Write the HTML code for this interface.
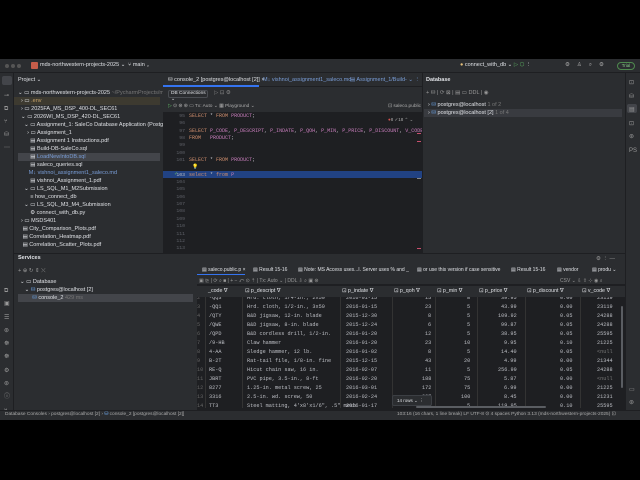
<!DOCTYPE html>
<html><head><meta charset="utf-8"><style>
*{margin:0;padding:0;box-sizing:border-box}
body{width:640px;height:480px;background:#000;position:relative;overflow:hidden;font-family:"Liberation Sans",sans-serif;font-size:5.5px;color:#bcbec4}
.a{position:absolute}
.m{font-family:"Liberation Mono",monospace}
.row{position:absolute;left:0;width:428px;height:9px;line-height:9px;white-space:nowrap}
.row span{position:absolute}
.kw{color:#cf8e6d}.id{color:#c77dbb}
</style></head><body>
<div class="a" style="left:0;top:59px;width:640px;height:361px;background:#2b2d30"></div>
<div class="a" style="left:0;top:59px;width:640px;height:14px;background:#2b2d30;border-bottom:1px solid #1e1f22"></div>
<div class="a" style="left:5px;top:64px;width:4px;height:4px;border-radius:50%;background:#555"></div>
<div class="a" style="left:11px;top:64px;width:4px;height:4px;border-radius:50%;background:#555"></div>
<div class="a" style="left:17px;top:64px;width:4px;height:4px;border-radius:50%;background:#555"></div>
<div class="a" style="left:31px;top:62px;width:7px;height:7px;border-radius:1px;background:#c65d4a"></div>
<div class="a" style="left:40px;top:62px;color:#dfe1e5">mds-northwestern-projects-2025 ⌄</div>
<div class="a" style="left:128px;top:62px;color:#dfe1e5">⑂ main ⌄</div>
<div class="a" style="left:460px;top:62px;color:#dfe1e5"><span style="color:#e5c07b">●</span> connect_with_db ⌄ <span style="color:#5fb865">▷ ⬡</span> ⋮</div>
<div class="a" style="left:565px;top:62px;color:#aaa;letter-spacing:7px">⚙♙⌕⚙</div>
<div class="a" style="left:617px;top:62px;width:18px;height:8px;border:1px solid #4e8a4e;border-radius:4px;color:#8c8;font-size:4.5px;text-align:center;line-height:6px">Trial</div>
<div class="a" style="left:0;top:73px;width:14px;height:337px;background:#2b2d30;border-right:1px solid #1e1f22"></div>
<div class="a" style="left:2px;top:76px;width:10px;height:9px;background:#43454a;border-radius:2px"></div>
<div class="a" style="left:4px;top:90px;color:#999;line-height:13px;font-size:6px">⊸<br>⧉<br>⑂<br>⛁<br>⋯</div>
<div class="a" style="left:4px;top:285px;color:#999;line-height:13.3px;font-size:6px">⧉<br>▣<br>☰<br>⊛<br>☸<br>☸<br>⚙<br>⊛<br>ⓘ<br>⑂</div>
<div class="a" style="left:18px;top:77px;color:#dfe1e5">Project ⌄</div>
<div class="a" style="left:14px;top:97px;width:146px;height:8px;background:#3d3a30"></div>
<div class="a" style="left:18px;top:153px;width:142px;height:8px;background:#43454a"></div>
<div class="a" style="line-height:8px;color:#dfe1e5;white-space:pre;left:18px;top:89px">⌄ ▭ mds-northwestern-projects-2025 <span style="color:#777">~/PycharmProjects/mds-n</span>
  › ▭ <span style="color:#c9a46a">.env</span>
  › ▭ 2025FA_MS_DSP_400-DL_SEC61
  ⌄ ▭ 2026WI_MS_DSP_420-DL_SEC61
    ⌄ ▭ Assignment_1: SaleCo Database Application (Postgres)
      › ▭ Assignment_1
        ▤ Assignment 1 Instructions.pdf
        ▤ Build-DB-SaleCo.sql
        ▤ <span style="color:#7a9ed8">LoadNewIntoDB.sql</span>
        ▤ saleco_queries.sql
       <span style="color:#7a9ed8">M↓ vishnoi_assignment1_saleco.md</span>
        ▤ vishnoi_Assignment_1.pdf
    ⌄ ▭ LS_SQL_M1_M2Submission
        ≡ how_connect_db
    ⌄ ▭ LS_SQL_M3_M4_Submission
        ⚙ connect_with_db.py
  › ▭ MSDS401
   ▤ City_Comparison_Plots.pdf
   ▤ Correlation_Heatmap.pdf
   ▤ Correlation_Scatter_Plots.pdf</div>
<div class="a" style="left:163px;top:73px;width:259px;height:180px;background:#1e1f22;border-left:1px solid #1e1f22"></div>
<div class="a" style="left:163px;top:73px;width:259px;height:14px;background:#2b2d30;border-bottom:1px solid #1e1f22"></div>
<div class="a" style="left:163px;top:85px;width:96px;height:2px;background:#3574f0"></div>
<div class="a" style="left:168px;top:77px;color:#dfe1e5;white-space:nowrap">⛁ console_2 [postgres@localhost [2]] ×</div>
<div class="a" style="left:263px;top:77px;color:#7a9ed8;white-space:nowrap">M↓ vishnoi_assignment1_saleco.md</div>
<div class="a" style="left:350px;top:77px;color:#7a9ed8;white-space:nowrap">▤ Assignment_1/Build-  ⌄ ⋮</div>
<div class="a" style="left:163px;top:87px;width:259px;height:26px;background:#2b2d30;border-bottom:1px solid #1e1f22"></div>
<div class="a" style="left:168px;top:90px;width:40px;height:8px;border:1px solid #4a4d52;border-radius:2px;color:#dfe1e5;font-size:4.8px;padding-left:2px;line-height:6px">DB Connections ⌄</div>
<div class="a" style="left:214px;top:90px;color:#888">▷  ⊡  ⚙</div>
<div class="a" style="left:388px;top:104px;color:#aaa;font-size:4.8px">⊡ saleco.public ⌄</div>
<div class="a" style="left:168px;top:104px;color:#aaa;font-size:4.8px;white-space:nowrap"><span style="color:#5fb865">▷</span> ⊙ ⊛ ⊛  ▭  Tx: Auto ⌄  ▦  Playground ⌄</div>
<div class="a" style="left:388px;top:117px;color:#aaa;font-size:4.5px"><span style="color:#d9534f">●</span>8 ✓18 ⌃ ⌄</div>
<div class="a" style="left:163px;top:171px;width:259px;height:7px;background:#214283"></div>
<div class="a m" style="left:163px;top:113px;width:22px;text-align:right;color:#5e6068;font-size:4.8px;line-height:7.35px;white-space:pre">95
96
97
98
99
100
101

<span style="color:#bcbec4">103</span>
104
105
106
107
108
109
110
111
112
113</div>
<div class="a" style="left:174px;top:171px;color:#5fb865;font-size:5px">✓</div>
<div class="a m" style="left:189px;top:113px;font-size:5px;line-height:7.35px;white-space:pre;color:#bcbec4"><span class="kw">SELECT</span> * <span class="kw">FROM</span> <span class="id">PRODUCT</span>;

<span class="kw">SELECT</span> <span class="id">P_CODE</span>, <span class="id">P_DESCRIPT</span>, <span class="id">P_INDATE</span>, <span class="id">P_QOH</span>, <span class="id">P_MIN</span>, <span class="id">P_PRICE</span>, <span class="id">P_DISCOUNT</span>, <span class="id">V_CODE</span>
<span class="kw">FROM</span>   <span class="id">PRODUCT</span>;


<span class="kw">SELECT</span> * <span class="kw">FROM</span> <span class="id">PRODUCT</span>;
 <span style="color:#e5c07b">💡</span>
<span class="kw">select</span> * <span class="kw">from</span> <span class="id">P</span></div>
<div class="a" style="left:417px;top:133px;width:4px;height:1px;background:#c94f6d"></div>
<div class="a" style="left:417px;top:141px;width:4px;height:1px;background:#c94f6d"></div>
<div class="a" style="left:417px;top:178px;width:4px;height:1px;background:#888"></div>
<div class="a" style="left:417px;top:248px;width:4px;height:1px;background:#c94f6d"></div>
<div class="a" style="left:422px;top:73px;width:203px;height:180px;background:#2b2d30;border-left:1px solid #1e1f22"></div>
<div class="a" style="left:426px;top:77px;color:#dfe1e5;font-weight:bold">Database</div>
<div class="a" style="left:426px;top:90px;color:#999;white-space:nowrap">+ ⛁ | ⟳ ⊠ | ▤ ▭ DDL | ◉</div>
<div class="a" style="left:424px;top:109px;width:198px;height:8px;background:#393b40"></div>
<div class="a" style="left:428px;top:101px;line-height:8px;color:#dfe1e5;white-space:pre">› <span style="color:#6aa0e0">⛁</span> postgres@localhost <span style="color:#777">1 of 2</span>
› <span style="color:#6aa0e0">⛁</span> postgres@localhost [2] <span style="color:#777">1 of 4</span></div>
<div class="a" style="left:625px;top:73px;width:15px;height:337px;background:#2b2d30;border-left:1px solid #1e1f22"></div>
<div class="a" style="left:627px;top:104px;width:10px;height:9px;background:#43454a;border-radius:2px"></div>
<div class="a" style="left:629px;top:77px;color:#999;line-height:13.5px;font-size:6px">⊡<br>⛁<br>▤<br>⊡<br>⊛<br>PS</div>
<div class="a" style="left:629px;top:384px;color:#999;line-height:13px;font-size:6px">▭<br>⊛</div>
<div class="a" style="left:14px;top:253px;width:611px;height:157px;background:#2b2d30;border-top:1px solid #1e1f22"></div>
<div class="a" style="left:18px;top:255px;color:#dfe1e5;font-weight:bold">Services</div>
<div class="a" style="left:18px;top:268px;color:#999">+ ⊕ ↻  ⇕ ⤬</div>
<div class="a" style="left:18px;top:294px;width:175px;height:8px;background:#43454a"></div>
<div class="a" style="left:20px;top:278px;line-height:8px;color:#dfe1e5;white-space:pre">⌄ ▭ Database
   ⌄ <span style="color:#6aa0e0">⛁</span> postgres@localhost [2]
        <span style="color:#6aa0e0">⛁</span> console_2 <span style="color:#777">429 ms</span></div>
<div class="a" style="left:596px;top:256px;color:#999">⚙ ⋮ —</div>
<div class="a" style="left:197px;top:263px;width:428px;height:147px;background:#1e1f22"></div>
<div class="a" style="left:197px;top:263px;width:428px;height:22px;background:#2b2d30;border-bottom:1px solid #1e1f22"></div>
<div class="a" style="left:197px;top:274px;width:48px;height:1px;background:#3574f0"></div>
<div class="a" style="left:202px;top:267px;color:#dfe1e5;white-space:nowrap;font-size:5px">▤ saleco.public.p ×</div>
<div class="a" style="left:253px;top:267px;color:#dfe1e5;white-space:nowrap;font-size:5px">▤ Result 15-16</div>
<div class="a" style="left:298px;top:267px;color:#dfe1e5;white-space:nowrap;font-size:5px">▤ Note: MS Access uses...I. Server uses % and _</div>
<div class="a" style="left:417px;top:267px;color:#dfe1e5;white-space:nowrap;font-size:5px">▤ or use this version if case sensitive</div>
<div class="a" style="left:511px;top:267px;color:#dfe1e5;white-space:nowrap;font-size:5px">▤ Result 15-16</div>
<div class="a" style="left:557px;top:267px;color:#dfe1e5;white-space:nowrap;font-size:5px">▤ vendor</div>
<div class="a" style="left:592px;top:267px;color:#dfe1e5;white-space:nowrap;font-size:5px">▤ produ  ⌄</div>
<div class="a" style="left:199px;top:278px;color:#999;white-space:nowrap;font-size:5px">▣ ⊵ | ⟳ ⌕ ■ | + − ⤺ ⊙ ⇡ | Tx: Auto ⌄ | DDL ⇩ ⌕ ▣ ⊛</div>
<div class="a" style="left:560px;top:278px;color:#999;white-space:nowrap;font-size:5px">CSV ⌄ ⇩ ⇧ ⊹ ◉ ⌕</div>
<div class="a" style="left:197px;top:286px;width:428px;height:11px;background:#2b2d30"></div>
<div class="a" style="left:197px;top:286px;width:428px;height:11px;color:#dfe1e5;font-size:5.3px;line-height:11px;white-space:nowrap">
<span class="a" style="left:11px">_code ∇</span><span class="a" style="left:48px">⊡ p_descript ∇</span><span class="a" style="left:145px">⊡ p_indate ∇</span><span class="a" style="left:197px">⊡ p_qoh ∇</span><span class="a" style="left:240px">⊡ p_min ∇</span><span class="a" style="left:282px">⊡ p_price ∇</span><span class="a" style="left:330px">⊡ p_discount ∇</span><span class="a" style="left:385px">⊡ v_code ∇</span></div>
<div class="a m" style="left:197px;top:297px;width:424px;height:111px;overflow:hidden;font-size:5.2px;color:#bcbec4">
<div class="a" style="left:8px;top:0;width:1px;height:114px;background:#333"></div>
<div class="a" style="left:45px;top:0;width:1px;height:114px;background:#333"></div>
<div class="a" style="left:143px;top:0;width:1px;height:114px;background:#333"></div>
<div class="a" style="left:195px;top:0;width:1px;height:114px;background:#333"></div>
<div class="a" style="left:238px;top:0;width:1px;height:114px;background:#333"></div>
<div class="a" style="left:280px;top:0;width:1px;height:114px;background:#333"></div>
<div class="a" style="left:328px;top:0;width:1px;height:114px;background:#333"></div>
<div class="a" style="left:383px;top:0;width:1px;height:114px;background:#333"></div>
<div class="row" style="top:-3px"><span style="left:0;color:#666">2</span><span style="left:12px">-QQ3</span><span style="left:50px">Hrd. cloth, 1/4-in., 2x50</span><span style="left:149px">2016-01-15</span><span style="left:228px">15</span><span style="left:270px">8</span><span style="left:304px">39.95</span><span style="left:363px">0.00</span><span style="left:400px">23119</span></div>
<div class="row" style="top:6px"><span style="left:0;color:#666">3</span><span style="left:12px">-QQ1</span><span style="left:50px">Hrd. cloth, 1/2-in., 3x50</span><span style="left:149px">2016-01-15</span><span style="left:228px">23</span><span style="left:270px">5</span><span style="left:304px">43.99</span><span style="left:363px">0.00</span><span style="left:400px">23119</span></div>
<div class="row" style="top:15px"><span style="left:0;color:#666">4</span><span style="left:12px">/QTY</span><span style="left:50px">B&amp;D jigsaw, 12-in. blade</span><span style="left:149px">2015-12-30</span><span style="left:231px">8</span><span style="left:270px">5</span><span style="left:301px">109.92</span><span style="left:363px">0.05</span><span style="left:400px">24288</span></div>
<div class="row" style="top:24px"><span style="left:0;color:#666">5</span><span style="left:12px">/QWE</span><span style="left:50px">B&amp;D jigsaw, 8-in. blade</span><span style="left:149px">2015-12-24</span><span style="left:231px">6</span><span style="left:270px">5</span><span style="left:304px">99.87</span><span style="left:363px">0.05</span><span style="left:400px">24288</span></div>
<div class="row" style="top:33px"><span style="left:0;color:#666">6</span><span style="left:12px">/QPD</span><span style="left:50px">B&amp;D cordless drill, 1/2-in.</span><span style="left:149px">2016-01-20</span><span style="left:228px">12</span><span style="left:270px">5</span><span style="left:304px">38.95</span><span style="left:363px">0.05</span><span style="left:400px">25595</span></div>
<div class="row" style="top:42px"><span style="left:0;color:#666">7</span><span style="left:12px">/9-HB</span><span style="left:50px">Claw hammer</span><span style="left:149px">2016-01-20</span><span style="left:228px">23</span><span style="left:267px">10</span><span style="left:307px">9.95</span><span style="left:363px">0.10</span><span style="left:400px">21225</span></div>
<div class="row" style="top:51px"><span style="left:0;color:#666">8</span><span style="left:12px">4-AA</span><span style="left:50px">Sledge hammer, 12 lb.</span><span style="left:149px">2016-01-02</span><span style="left:231px">8</span><span style="left:270px">5</span><span style="left:304px">14.40</span><span style="left:363px">0.05</span><span style="left:400px;color:#777">&lt;null</span></div>
<div class="row" style="top:60px"><span style="left:0;color:#666">9</span><span style="left:12px">B-2T</span><span style="left:50px">Rat-tail file, 1/8-in. fine</span><span style="left:149px">2015-12-15</span><span style="left:228px">43</span><span style="left:267px">20</span><span style="left:307px">4.99</span><span style="left:363px">0.00</span><span style="left:400px">21344</span></div>
<div class="row" style="top:69px"><span style="left:0;color:#666">10</span><span style="left:12px">RE-Q</span><span style="left:50px">Hicut chain saw, 16 in.</span><span style="left:149px">2016-02-07</span><span style="left:228px">11</span><span style="left:270px">5</span><span style="left:301px">256.99</span><span style="left:363px">0.05</span><span style="left:400px">24288</span></div>
<div class="row" style="top:78px"><span style="left:0;color:#666">11</span><span style="left:12px">JBRT</span><span style="left:50px">PVC pipe, 3.5-in., 8-ft</span><span style="left:149px">2016-02-20</span><span style="left:225px">188</span><span style="left:267px">75</span><span style="left:307px">5.87</span><span style="left:363px">0.00</span><span style="left:400px;color:#777">&lt;null</span></div>
<div class="row" style="top:87px"><span style="left:0;color:#666">12</span><span style="left:12px">8277</span><span style="left:50px">1.25-in. metal screw, 25</span><span style="left:149px">2016-03-01</span><span style="left:225px">172</span><span style="left:267px">75</span><span style="left:307px">6.99</span><span style="left:363px">0.00</span><span style="left:400px">21225</span></div>
<div class="row" style="top:96px"><span style="left:0;color:#666">13</span><span style="left:12px">3316</span><span style="left:50px">2.5-in. wd. screw, 50</span><span style="left:149px">2016-02-24</span><span style="left:225px">237</span><span style="left:264px">100</span><span style="left:307px">8.45</span><span style="left:363px">0.00</span><span style="left:400px">21231</span></div>
<div class="row" style="top:105px"><span style="left:0;color:#666">14</span><span style="left:12px">TT3</span><span style="left:50px">Steel matting, 4'x8'x1/6", .5" mesh</span><span style="left:149px">2016-01-17</span><span style="left:228px">18</span><span style="left:270px">5</span><span style="left:301px">119.95</span><span style="left:363px">0.10</span><span style="left:400px">25595</span></div>
</div>
<div class="a" style="left:392px;top:395px;width:40px;height:11px;background:#2b2d30;border:1px solid #3c3f44;border-radius:2px;color:#dfe1e5;font-size:4.5px;line-height:9px;padding-left:4px">14 rows ⌄ ⋮</div>
<div class="a" style="left:416px;top:406px;width:130px;height:2px;background:#5a5d62;border-radius:1px"></div>
<div class="a" style="left:621px;top:306px;width:2px;height:82px;background:#5a5d62;border-radius:1px"></div>
<div class="a" style="left:0;top:410px;width:640px;height:10px;background:#2b2d30;border-top:1px solid #1e1f22"></div>
<div class="a" style="left:5px;top:412px;color:#aaa;font-size:4.8px;white-space:nowrap">Database Consoles › postgres@localhost [2] › <span style="color:#6aa0e0">⛁</span> console_2 [postgres@localhost [2]]</div>
<div class="a" style="left:397px;top:412px;color:#aaa;font-size:4.8px;white-space:nowrap">103:16 (16 chars, 1 line break)   LF   UTF-8   ⊙ 4 spaces   Python 3.13 (mds-northwestern-projects-2025)  ⊡</div>
</body></html>
